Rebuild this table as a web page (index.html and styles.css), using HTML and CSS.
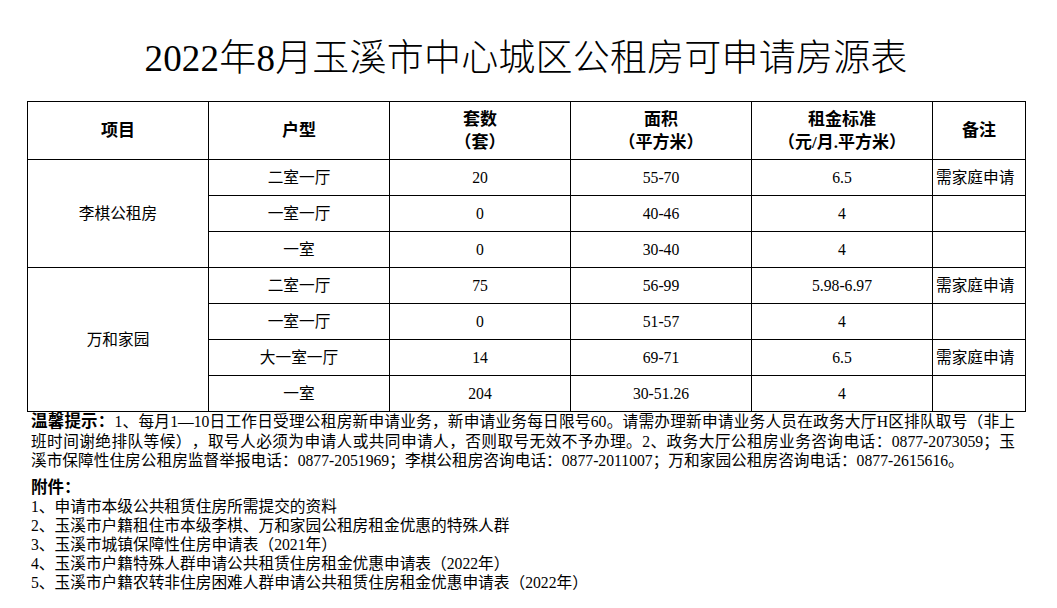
FILE: index.html
```html
<!DOCTYPE html>
<html lang="zh-CN">
<head>
<meta charset="utf-8">
<title>2022年8月玉溪市中心城区公租房可申请房源表</title>
<link rel="stylesheet" href="styles.css">
</head>
<body>
<div class="page">
  <h1 class="title">2022年8月玉溪市中心城区公租房可申请房源表</h1>
  <table class="grid">
    <colgroup>
      <col class="c-main"><col class="c-main"><col class="c-main"><col class="c-main"><col class="c-main"><col class="c-note">
    </colgroup>
    <thead>
      <tr>
        <th>项目</th>
        <th>户型</th>
        <th>套数<br>（套）</th>
        <th>面积<br>（平方米）</th>
        <th>租金标准<br>（元/月.平方米）</th>
        <th>备注</th>
      </tr>
    </thead>
    <tbody>
      <tr><td rowspan="3">李棋公租房</td><td>二室一厅</td><td>20</td><td>55-70</td><td>6.5</td><td class="note">需家庭申请</td></tr>
      <tr><td>一室一厅</td><td>0</td><td>40-46</td><td>4</td><td class="note"></td></tr>
      <tr><td>一室</td><td>0</td><td>30-40</td><td>4</td><td class="note"></td></tr>
      <tr><td rowspan="4">万和家园</td><td>二室一厅</td><td>75</td><td>56-99</td><td>5.98-6.97</td><td class="note">需家庭申请</td></tr>
      <tr><td>一室一厅</td><td>0</td><td>51-57</td><td>4</td><td class="note"></td></tr>
      <tr><td>大一室一厅</td><td>14</td><td>69-71</td><td>6.5</td><td class="note">需家庭申请</td></tr>
      <tr><td>一室</td><td>204</td><td>30-51.26</td><td>4</td><td class="note"></td></tr>
    </tbody>
  </table>
  <div class="tip">
    <span class="jline"><b class="lead">温馨提示：</b>1、每月1—10日工作日受理公租房新申请业务，新申请业务每日限号60。请需办理新申请业务人员在政务大厅H区排队取号（非上</span>
    <span class="jline">班时间谢绝排队等候），取号人必须为申请人或共同申请人，否则取号无效不予办理。2、政务大厅公租房业务咨询电话：0877-2073059；玉</span>
    <span class="lline">溪市保障性住房公租房监督举报电话：0877-2051969；李棋公租房咨询电话：0877-2011007；万和家园公租房咨询电话：0877-2615616。</span>
  </div>
  <div class="attach">
    <b class="lead">附件：</b>
    <span class="item">1、申请市本级公共租赁住房所需提交的资料</span>
    <span class="item">2、玉溪市户籍租住市本级李棋、万和家园公租房租金优惠的特殊人群</span>
    <span class="item">3、玉溪市城镇保障性住房申请表（2021年）</span>
    <span class="item">4、玉溪市户籍特殊人群申请公共租赁住房租金优惠申请表（2022年）</span>
    <span class="item">5、玉溪市户籍农转非住房困难人群申请公共租赁住房租金优惠申请表（2022年）</span>
  </div>
</div>
</body>
</html>
```

FILE: styles.css
```css
html, body {
  margin: 0;
  padding: 0;
  background: #fff;
}

body {
  font-family: "Liberation Serif", "Noto Sans CJK SC", serif;
  color: #000;
  font-size: 15.7px;
  text-spacing-trim: space-all;
}

.page {
  width: 998px;
  padding-left: 27px;
}

.title {
  margin: 0;
  height: 101px;
  box-sizing: border-box;
  padding-top: 40px;
  font-size: 37px;
  line-height: 37px;
  font-weight: 300;
  text-align: center;
  letter-spacing: 0.2px;
}

.grid {
  width: 998px;
  border-collapse: collapse;
  table-layout: fixed;
}

.c-main { width: 181px; }
.c-note { width: 93px; }

.grid th,
.grid td {
  border: 1px solid #000;
  padding: 0;
  text-align: center;
  vertical-align: middle;
}

.grid th {
  height: 57px;
  font-size: 17px;
  font-weight: 700;
  line-height: 23px;
}

.grid td {
  height: 35px;
  font-size: 15.7px;
  font-weight: 400;
  line-height: 20px;
}

.grid td.note {
  text-align: left;
  padding-left: 3px;
  white-space: nowrap;
}

.tip {
  padding: 0 10px 0 4px;
  line-height: 19.5px;
  font-size: 15.7px;
}

.jline {
  display: block;
  text-align: justify;
  text-align-last: justify;
}

.lline {
  display: block;
  text-align: left;
}

.lead {
  font-weight: 700;
  font-size: 16.5px;
}

.attach {
  margin-top: 7px;
  padding-left: 4px;
  display: flex;
  flex-direction: column;
  line-height: 19px;
  font-size: 15.7px;
}

.item {
  display: block;
}
```
